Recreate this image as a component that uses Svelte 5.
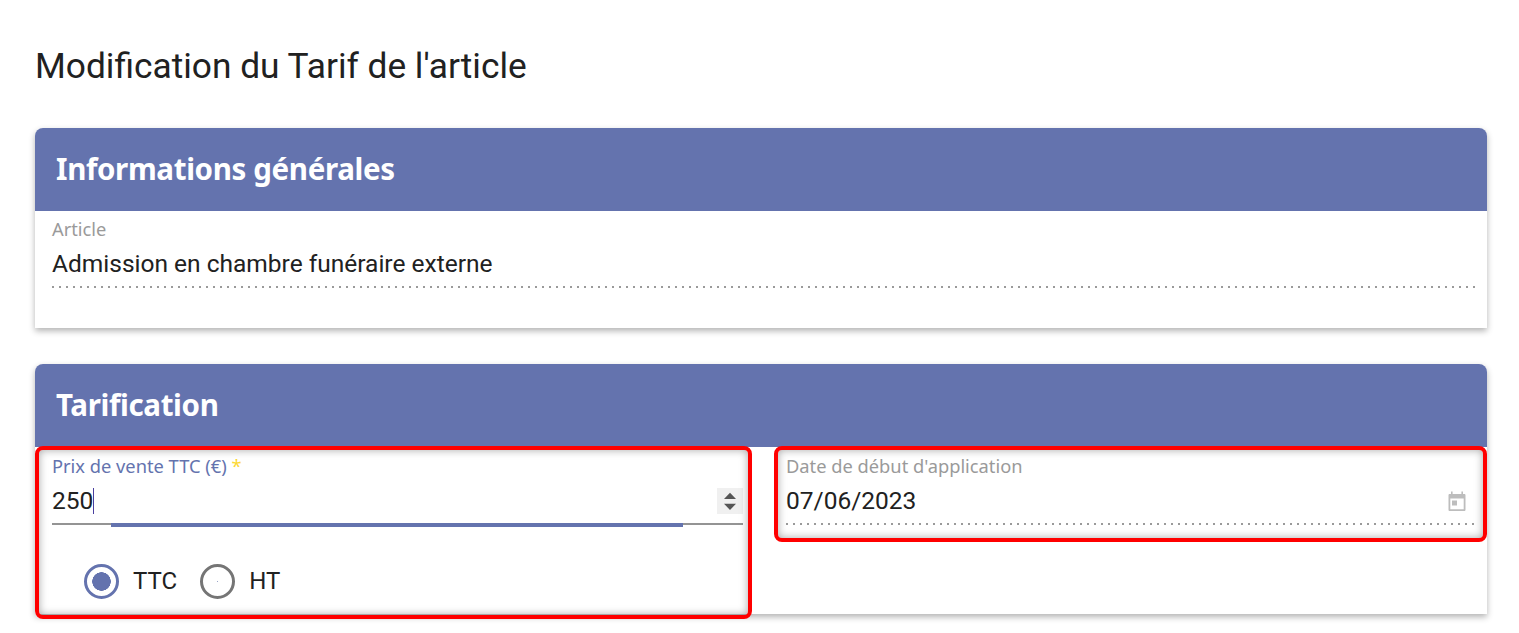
<script lang="ts">
	let prix = $state('250');
</script>

<main class="page">
	<h1>Modification du Tarif de l'article</h1>

	<section class="card info">
		<header><h2>Informations générales</h2></header>
		<div class="body">
			<div class="field readonly">
				<span class="label">Article</span>
				<div class="value">Admission en chambre funéraire externe</div>
			</div>
		</div>
	</section>

	<section class="card tarif">
		<header><h2>Tarification</h2></header>
		<div class="cols">
			<div class="col left">
				<div class="field active">
					<span class="label">Prix de vente TTC (€) <em>*</em></span>
					<div class="value">
						<span class="typed">{prix}</span>
						<span class="spin">
							<svg width="14" height="20" viewBox="0 0 14 20"><path d="M7 1.800 13 8H1zM1 12.800h12L7 19z" fill="#555" /></svg>
						</span>
					</div>
				</div>
				<div class="radios">
					<label class="radio on"><i></i>TTC</label>
					<label class="radio"><i></i>HT</label>
				</div>
				<span class="mark"></span>
			</div>
			<div class="col right">
				<div class="field readonly">
					<span class="label">Date de début d'application</span>
					<div class="value">
						<span>07/06/2023</span>
						<svg class="cal" width="20" height="22" viewBox="0 0 20 22">
							<path d="M4 1.500h1.600V4h8.800V1.500H16V4h1.200c.9 0 1.300.5 1.300 1.300v14.400c0 .8-.4 1.300-1.300 1.300H2.800c-.9 0-1.300-.5-1.300-1.300V5.300C1.500 4.500 1.900 4 2.800 4H4zM3.300 8.500v10.700h13.400V8.500z" fill="#bdbdbd" fill-rule="evenodd" />
							<rect x="5" y="10.500" width="5" height="5" fill="#bdbdbd" />
						</svg>
					</div>
				</div>
				<span class="mark"></span>
			</div>
		</div>
	</section>
</main>

<style>
	:global(body) {
		margin: 0;
		background: #fff;
		overflow: hidden;
	}

	.page {
		padding: 44px 32px 0 35px;
		height: 589px;
		font-family: Roboto, 'Liberation Sans', sans-serif;
		color: #212121;
	}

	h1 {
		margin: 0 0 40px;
		font-size: 35.3px;
		font-weight: 400;
		line-height: 44px;
		color: #212121;
	}

	.card {
		background: #fff;
		border-radius: 8px 8px 0 0;
		box-shadow: 0 3px 6px rgba(0, 0, 0, 0.3);
	}

	.info {
		height: 200px;
		margin-bottom: 36px;
	}

	.tarif {
		height: 250px;
	}

	header {
		box-sizing: border-box;
		height: 83px;
		display: flex;
		align-items: center;
		padding: 0 0 3px 21px;
		background: #6473ae;
		border-radius: 8px 8px 0 0;
	}

	h2 {
		margin: 0;
		font-family: 'Noto Sans', 'Open Sans', sans-serif;
		font-size: 29.5px;
		font-weight: 700;
		letter-spacing: -0.35px;
		color: #fff;
	}

	.body {
		padding: 6px 12px 0 17px;
	}

	.body .value {
		height: 48px;
	}

	.field {
		display: flex;
		flex-direction: column;
	}

	.label {
		font-family: 'Noto Sans', 'Open Sans', sans-serif;
		font-size: 18.3px;
		line-height: 24px;
		color: #9a9a9a;
	}

	.value {
		display: flex;
		align-items: center;
		justify-content: space-between;
		box-sizing: border-box;
		height: 43px;
		font-size: 24.5px;
		color: #212121;
	}

	.readonly .value {
		height: 47px;
		padding-bottom: 2px;
		background: linear-gradient(to right, #9a9a9a 2px, transparent 2px) left bottom / 7px 2px repeat-x;
	}

	.cols {
		display: grid;
		grid-template-columns: 717px 713px;
		gap: 22px;
		margin-top: -1px;
	}

	.col {
		position: relative;
		box-sizing: border-box;
	}

	.left {
		height: 173px;
		padding: 8px 9px 0 17px;
	}

	.right {
		height: 96px;
		padding: 8px 12px 0 12px;
	}

	.active .label {
		color: #6473ae;
	}

	.active em {
		font-style: normal;
		color: #fdd835;
	}

	.active .value {
		position: relative;
		height: 47px;
		padding-bottom: 0;
		border-bottom: 2px solid #949494;
	}

	.active .value::after {
		content: '';
		position: absolute;
		left: 59px;
		right: 60px;
		bottom: -4px;
		height: 4px;
		background: #6473ae;
	}

	.typed {
		border-right: 1px solid #4a3f9f;
		line-height: 26px;
	}

	.spin {
		display: flex;
		align-items: center;
		justify-content: center;
		width: 26px;
		height: 26px;
		background: #f0f0f0;
	}

	.cal {
		margin-right: 8px;
	}

	.radios {
		display: flex;
		gap: 23px;
		margin: 39px 0 0 32px;
	}

	.radio {
		display: flex;
		align-items: center;
		gap: 14px;
		font-size: 24px;
		line-height: 35px;
		color: #212121;
	}

	.radio i {
		box-sizing: border-box;
		width: 35px;
		height: 35px;
		border: 3.500px solid #757575;
		border-radius: 50%;
		background: radial-gradient(circle, #9aa5c8 0 0.7px, #fff 1px);
	}

	.radio.on i {
		border-color: #6473ae;
		background: radial-gradient(circle, #6473ae 0 9px, #fff 9.500px);
	}

	/* red annotation frame over the field */
	.mark {
		position: absolute;
		inset: 0;
		box-sizing: border-box;
		border: 4px solid #f00;
		border-radius: 8px;
		box-shadow: inset 0 0 8px rgba(0, 0, 0, 0.35);
		pointer-events: none;
	}
</style>
